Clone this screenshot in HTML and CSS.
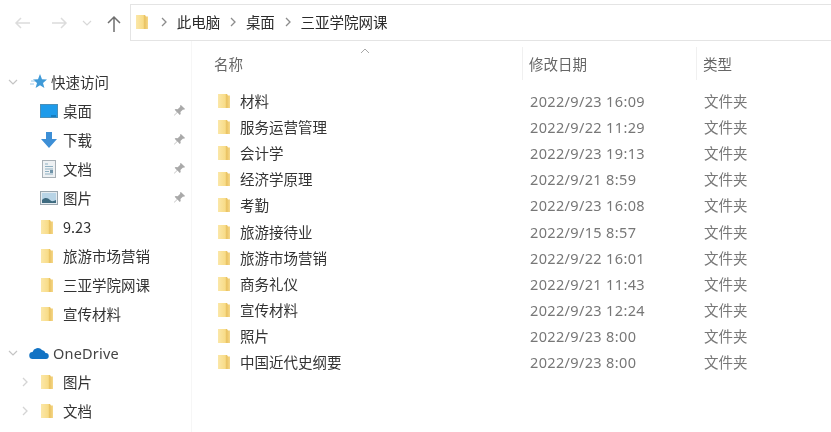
FILE: index.html
```html
<!DOCTYPE html>
<html lang="zh-CN">
<head>
<meta charset="utf-8">
<title>三亚学院网课</title>
<link rel="stylesheet" href="styles.css">
</head>
<body>
<svg class="defs" width="0" height="0" aria-hidden="true">
  <defs>
    <linearGradient id="fg" x1="0" x2="1" y1="0" y2="0">
      <stop offset="0" stop-color="#fbe7a8"/><stop offset="0.6" stop-color="#f8dc88"/><stop offset="0.72" stop-color="#e9c262"/><stop offset="1" stop-color="#f6d88a"/>
    </linearGradient>
    <symbol id="folder" viewBox="0 0 12 16">
      <path d="M0 1h9l1 1.500h2V15H0z" fill="url(#fg)"/>
    </symbol>
    <symbol id="chev-r" viewBox="0 0 10 10"><path d="M3 1l4 4-4 4" fill="none" stroke="currentColor" stroke-width="1.3"/></symbol>
    <symbol id="chev-d" viewBox="0 0 10 10"><path d="M1 3l4 4 4-4" fill="none" stroke="currentColor" stroke-width="1.2"/></symbol>
    <symbol id="pin" viewBox="0 0 14 14"><path d="M8.500 1l4.500 4.500-1.200.6-1-.3L8 8.600l.3 2.200-1 1-2.500-2.600L1.500 12.500l-.5-.5 3.300-3.200L1.800 6.300l1-1 2.200.3 2.800-2.700-.3-1z" fill="#a9a9a9"/></symbol>
  </defs>
</svg>

<header class="toolbar">
  <nav class="nav">
    <svg class="nav-arrow" width="20" height="14" viewBox="0 0 20 14"><path d="M17 7H3M8 2L3 7l5 5" fill="none" stroke="#dcdcdc" stroke-width="1.500"/></svg>
    <svg class="nav-arrow next" width="20" height="14" viewBox="0 0 20 14"><path d="M3 7h14M12 2l5 5-5 5" fill="none" stroke="#dcdcdc" stroke-width="1.500"/></svg>
    <svg class="nav-down" width="10" height="10"><use href="#chev-d" color="#d8d8d8"/></svg>
    <svg class="nav-up" width="16" height="18" viewBox="0 0 16 18"><path d="M8 17V2M2 8l6-6 6 6" fill="none" stroke="#6f6f6f" stroke-width="1.500"/></svg>
  </nav>
  <div class="address">
    <svg class="addr-folder" width="12" height="16"><use href="#folder"/></svg>
    <svg class="crumb-sep" width="10" height="10"><use href="#chev-r"/></svg>
    <span>此电脑</span>
    <svg class="crumb-sep" width="10" height="10"><use href="#chev-r"/></svg>
    <span>桌面</span>
    <svg class="crumb-sep" width="10" height="10"><use href="#chev-r"/></svg>
    <span>三亚学院网课</span>
  </div>
</header>

<div class="main">
  <aside class="side">
    <div class="side-row head">
      <svg class="twisty" width="10" height="10"><use href="#chev-d"/></svg>
      <svg class="side-icon" width="18" height="18" viewBox="0 0 18 18"><path d="M10 1l2 5.200 5 .3-4 3.400 1.400 5.100L10 12.200 5.600 15 7 9.900 3 6.500l5-.3z" fill="#3f9ad8"/><path d="M1 8h4M0 11h4" stroke="#9cc9e8" stroke-width="1"/></svg>
      <span>快速访问</span>
    </div>
    <div class="side-row item">
      <svg class="item-icon wide" width="18" height="14" viewBox="0 0 18 14"><rect x="0.500" y="0.500" width="17" height="13" fill="#1e9bea" stroke="#4a8fb8"/><path d="M11 12h5" stroke="#0d5f96"/></svg>
      <span class="label">桌面</span>
      <svg class="pin" width="13" height="13"><use href="#pin"/></svg>
    </div>
    <div class="side-row item">
      <svg class="item-icon wide" width="18" height="18" viewBox="0 0 18 18"><path d="M6 1h6v7h5l-8 9-8-9h5z" fill="#3d8fd6"/></svg>
      <span class="label">下载</span>
      <svg class="pin" width="13" height="13"><use href="#pin"/></svg>
    </div>
    <div class="side-row item">
      <svg class="item-icon wide" width="18" height="18" viewBox="0 0 18 18"><rect x="2.500" y="0.500" width="13" height="17" fill="#eef1f3" stroke="#a8b0b6"/><path d="M5 4h3M5 6.500h8M5 9h8M5 11.500h4M5 14h8" stroke="#8fb0c2"/><rect x="10" y="10" width="3" height="3" fill="#6f93a8"/></svg>
      <span class="label">文档</span>
      <svg class="pin" width="13" height="13"><use href="#pin"/></svg>
    </div>
    <div class="side-row item">
      <svg class="item-icon wide" width="18" height="14" viewBox="0 0 18 14"><rect x="0.500" y="0.500" width="17" height="13" fill="#e4ebf0" stroke="#9aa6ae"/><rect x="2" y="2" width="14" height="10" fill="#b8d4e6"/><path d="M2 9c3-3 6-2 8 0s4 1 6 0v3H2z" fill="#3f6b80"/></svg>
      <span class="label">图片</span>
      <svg class="pin" width="13" height="13"><use href="#pin"/></svg>
    </div>
    <div class="side-row item"><svg class="item-icon" width="12" height="16"><use href="#folder"/></svg><span class="label">9.23</span></div>
    <div class="side-row item"><svg class="item-icon" width="12" height="16"><use href="#folder"/></svg><span class="label">旅游市场营销</span></div>
    <div class="side-row item"><svg class="item-icon" width="12" height="16"><use href="#folder"/></svg><span class="label">三亚学院网课</span></div>
    <div class="side-row item"><svg class="item-icon" width="12" height="16"><use href="#folder"/></svg><span class="label">宣传材料</span></div>
    <div class="side-row head drive">
      <svg class="twisty" width="10" height="10"><use href="#chev-d"/></svg>
      <svg class="side-icon" width="20" height="14" viewBox="0 0 20 14"><path d="M4 13a3.500 3.500 0 0 1-.5-7A5.500 5.500 0 0 1 13 4a4 4 0 0 1 3.500 3 3 3 0 0 1 .5 6z" fill="#1273c4"/></svg>
      <span class="num">OneDrive</span>
    </div>
    <div class="side-row item sub">
      <svg class="twisty" width="10" height="10"><use href="#chev-r"/></svg>
      <svg class="item-icon" width="12" height="16"><use href="#folder"/></svg><span class="label">图片</span>
    </div>
    <div class="side-row item sub">
      <svg class="twisty" width="10" height="10"><use href="#chev-r"/></svg>
      <svg class="item-icon" width="12" height="16"><use href="#folder"/></svg><span class="label">文档</span>
    </div>
  </aside>

  <section class="list">
    <div class="columns">
      <svg class="sort" width="10" height="6" viewBox="0 0 10 6"><path d="M1 5l4-4 4 4" fill="none" stroke="#a8a8a8"/></svg>
      <div class="col col-name">名称</div>
      <div class="col col-date">修改日期</div>
      <div class="col col-type">类型</div>
    </div>
    <div class="rows">
      <div class="row"><div class="name"><svg width="12" height="16"><use href="#folder"/></svg><span>材料</span></div><div class="date">2022/9/23 16:09</div><div class="type">文件夹</div></div>
      <div class="row"><div class="name"><svg width="12" height="16"><use href="#folder"/></svg><span>服务运营管理</span></div><div class="date">2022/9/22 11:29</div><div class="type">文件夹</div></div>
      <div class="row"><div class="name"><svg width="12" height="16"><use href="#folder"/></svg><span>会计学</span></div><div class="date">2022/9/23 19:13</div><div class="type">文件夹</div></div>
      <div class="row"><div class="name"><svg width="12" height="16"><use href="#folder"/></svg><span>经济学原理</span></div><div class="date">2022/9/21 8:59</div><div class="type">文件夹</div></div>
      <div class="row"><div class="name"><svg width="12" height="16"><use href="#folder"/></svg><span>考勤</span></div><div class="date">2022/9/23 16:08</div><div class="type">文件夹</div></div>
      <div class="row"><div class="name"><svg width="12" height="16"><use href="#folder"/></svg><span>旅游接待业</span></div><div class="date">2022/9/15 8:57</div><div class="type">文件夹</div></div>
      <div class="row"><div class="name"><svg width="12" height="16"><use href="#folder"/></svg><span>旅游市场营销</span></div><div class="date">2022/9/22 16:01</div><div class="type">文件夹</div></div>
      <div class="row"><div class="name"><svg width="12" height="16"><use href="#folder"/></svg><span>商务礼仪</span></div><div class="date">2022/9/21 11:43</div><div class="type">文件夹</div></div>
      <div class="row"><div class="name"><svg width="12" height="16"><use href="#folder"/></svg><span>宣传材料</span></div><div class="date">2022/9/23 12:24</div><div class="type">文件夹</div></div>
      <div class="row"><div class="name"><svg width="12" height="16"><use href="#folder"/></svg><span>照片</span></div><div class="date">2022/9/23 8:00</div><div class="type">文件夹</div></div>
      <div class="row"><div class="name"><svg width="12" height="16"><use href="#folder"/></svg><span>中国近代史纲要</span></div><div class="date">2022/9/23 8:00</div><div class="type">文件夹</div></div>
    </div>
  </section>
</div>
</body>
</html>
```
FILE: styles.css
```css
* { box-sizing: border-box; }
html, body { height: 100%; }
body {
  margin: 0;
  width: 831px;
  height: 432px;
  overflow: hidden;
  background: #fff;
  color: #333;
  font: 14.5px/20px "Noto Sans CJK SC", "Liberation Sans", sans-serif;
  filter: blur(0.3px);
}
.defs { position: absolute; }

.toolbar { display: flex; align-items: stretch; height: 41px; padding-top: 4px; }
.nav { width: 130px; display: flex; align-items: center; padding-left: 13px; }
.nav-arrow.next { margin-left: 16px; }
.nav-down { margin-left: 13px; }
.nav-up { margin-left: 14px; margin-top: 2px; }
.address {
  flex: 1;
  display: flex;
  align-items: center;
  padding-left: 5px;
  padding-bottom: 1px;
  border: 1px solid #e4e4e4;
  border-right: 0;
  color: #2a2a2a;
}
.crumb-sep { color: #8c8c8c; margin: 0 7.7px 0 8px; }
.addr-folder { margin-right: 3px; }

.main { display: flex; height: 391px; }

.side { width: 192px; border-right: 1px solid #f6f6f6; padding-top: 26px; flex: none; }
.side-row { height: 29px; display: flex; align-items: center; position: relative; }
.twisty { color: #c4c4c4; margin-left: 8px; flex: none; }
.head .side-icon { margin-left: 12px; }
.head span { margin-left: 3px; }
.drive { margin-top: 10px; }
.drive .side-icon { margin-left: 11px; }
.drive span { margin-left: 4px; }
.item .item-icon { margin-left: 41px; flex: none; }
.item .item-icon.wide { margin-left: 40px; }
.sub .twisty { margin-left: 20px; color: #d4d4d4; }
.sub .item-icon { margin-left: 11px; }
.label { margin-left: 10px; color: #333; }
.wide + .label { margin-left: 5px; }
.num { font-family: "Noto Sans", sans-serif; letter-spacing: 0.2px; color: #444; }
.pin { position: absolute; left: 173px; top: 8px; }

.list { flex: 1; min-width: 0; }
.columns {
  position: relative;
  display: grid;
  grid-template-columns: 331px 174px 1fr;
  height: 39px;
  color: #666;
}
.sort { position: absolute; left: 168px; top: 7px; }
.col { height: 33px; margin-top: 6px; line-height: 34px; border-right: 1px solid #f0f0f0; }
.col-name { padding-left: 22px; }
.col-date { padding-left: 6px; }
.col-type { padding-left: 6px; border-right: 0; }
.rows { padding-top: 8px; }
.row { display: grid; grid-template-columns: 330px 175px 1fr; height: 26.1px; align-items: center; }
.name { display: flex; align-items: center; padding-left: 26px; color: #333; }
.name span { margin-left: 10px; }
.date { padding-left: 8px; color: #777; font-family: "Noto Sans", sans-serif; letter-spacing: 0.35px; }
.type { padding-left: 7px; color: #777; }
```
